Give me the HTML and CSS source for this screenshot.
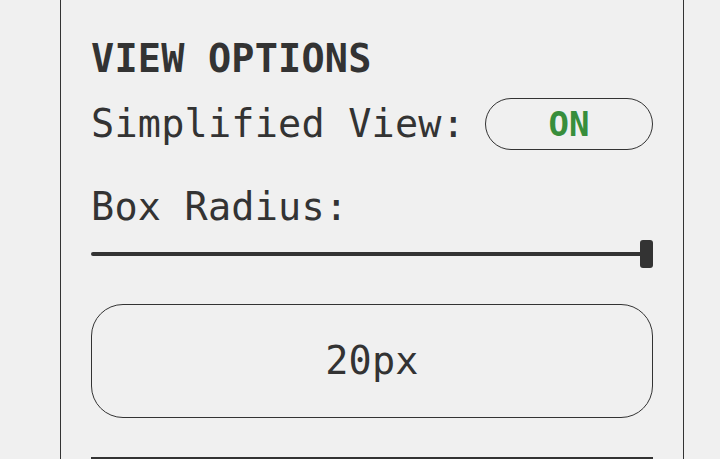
FILE: index.html
```html
<!DOCTYPE html>
<html lang="en">
<head>
  <meta charset="UTF-8">
  <meta name="viewport" content="width=device-width, initial-scale=1.0">
  <title>View Options</title>
  <link rel="stylesheet" href="styles.css">
</head>
<body>
  <section class="panel">
    <h2 class="panel-title">VIEW OPTIONS</h2>
    <div class="option-row">
      <span class="option-label">Simplified View:</span>
      <button class="toggle-btn on">ON</button>
    </div>
    <label class="option-label block" for="radius">Box Radius:</label>
    <input class="radius-slider" type="range" id="radius" min="0" max="20" value="20">
    <div class="radius-preview">20px</div>
    <div class="divider"></div>
  </section>
</body>
</html>
```

FILE: styles.css
```css
:root {
  --bg: #f0f0f0;
  --text: #333;
  --green: #388e3c;
}
* { box-sizing: border-box; }
body {
  margin: 0;
  background: var(--bg);
  color: var(--text);
  font-family: 'DejaVu Sans Mono', 'Liberation Mono', monospace;
  font-size: 38.5px;
  line-height: 46px;
  letter-spacing: 0.2px;
  overflow: hidden;
}
.panel {
  margin-left: 60px;
  width: 624px;
  min-height: 100vh;
  border-left: 1px solid var(--text);
  border-right: 1px solid var(--text);
  padding: 36px 30px 0;
}
.panel-title {
  margin: 0;
  font-size: inherit;
  font-weight: bold;
}
.option-row {
  display: flex;
  align-items: center;
  justify-content: space-between;
  margin-top: 16px;
}
.option-label.block {
  display: block;
  margin-top: 34px;
}
.toggle-btn {
  width: 168px;
  height: 52px;
  border: 1px solid var(--text);
  border-radius: 26px;
  background: transparent;
  font-family: inherit;
  font-size: 34px;
  font-weight: bold;
  color: var(--green);
  padding: 0;
}
.radius-slider {
  -webkit-appearance: none;
  appearance: none;
  display: block;
  width: 100%;
  height: 28px;
  margin: 10px 0 0;
  background: transparent;
}
.radius-slider::-webkit-slider-runnable-track {
  height: 4px;
  background: var(--text);
  border-radius: 2px;
}
.radius-slider::-webkit-slider-thumb {
  -webkit-appearance: none;
  width: 13px;
  height: 28px;
  margin-top: -12px;
  border-radius: 3px;
  background: var(--text);
}
.radius-preview {
  margin-top: 36px;
  height: 114px;
  border: 1px solid var(--text);
  border-radius: 32px;
  display: flex;
  align-items: center;
  justify-content: center;
}
.divider {
  margin-top: 39px;
  border-top: 2px solid var(--text);
}
```
